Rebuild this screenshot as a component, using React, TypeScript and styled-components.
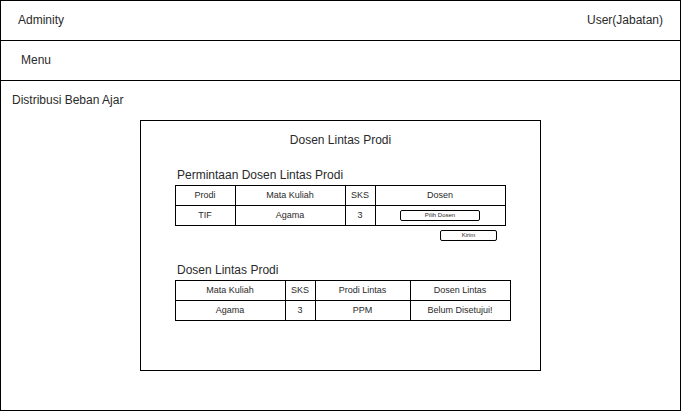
import React from "react";
import styled, { createGlobalStyle } from "styled-components";

const GlobalStyle = createGlobalStyle`
  *, *::before, *::after { box-sizing: border-box; }
  body {
    margin: 0;
    background: #fff;
    color: #2a2a2a;
    font-family: "Liberation Sans", Arial, Helvetica, sans-serif;
    font-size: 12px;
    line-height: 14px;
  }
`;

const Page = styled.div`
  display: flex;
  flex-direction: column;
  min-height: 100vh;
  border: 1px solid #000;
`;

const Bar = styled.div<{ $inset: number }>`
  display: flex;
  align-items: center;
  justify-content: space-between;
  min-height: 40px;
  padding: 0 17px 2px ${(p) => p.$inset}px;
  border-bottom: 1px solid #000;
`;

const Main = styled.main`
  display: flex;
  flex-direction: column;
  gap: 13px;
  padding: 12px 11px 39px;
`;

const PageTitle = styled.h1`
  margin: 0;
  font-size: 12px;
  font-weight: 400;
`;

const Card = styled.section`
  width: 100%;
  max-width: 401px;
  min-height: 251px;
  margin: 0 auto;
  padding: 12px 34px 49px;
  border: 1px solid #000;
`;

const CardTitle = styled.h2`
  margin: 0 0 21px;
  font-size: 12px;
  font-weight: 400;
  text-align: center;
`;

const Group = styled.section`
  & + & {
    margin-top: 22px;
  }
`;

const GroupTitle = styled.h3`
  margin: 0 0 3px;
  padding-left: 2px;
  font-size: 12px;
  font-weight: 400;
`;

const Table = styled.table<{ $width: number }>`
  width: ${(p) => p.$width}px;
  table-layout: fixed;
  border-collapse: separate;
  border-spacing: 0;
  border: solid #000;
  border-width: 1px 0 0 1px;
  font-size: 9px;
  line-height: 11px;
  text-align: center;

  th,
  td {
    height: 20px;
    padding: 0 1px 0 0;
    border: solid #000;
    border-width: 0 1px 1px 0;
    font-weight: 400;
    vertical-align: middle;
  }
`;

const Col = styled.col<{ $width: number }>`
  width: ${(p) => p.$width}px;
`;

const SmallButton = styled.button<{ $width: number }>`
  display: block;
  width: ${(p) => p.$width}px;
  height: 11px;
  margin: 0 auto;
  padding: 0;
  border: 1px solid #000;
  border-radius: 2px;
  background: #fff;
  color: inherit;
  font-family: inherit;
  font-size: 6px;
  line-height: 9px;
  text-align: center;
`;

const Actions = styled.div`
  display: flex;
  width: 322px;
  margin-top: 4px;

  ${SmallButton} {
    margin-right: 0;
  }
`;

interface DataTableProps {
  columns: { label: string; width: number }[];
  row: React.ReactNode[];
}

function DataTable({ columns, row }: DataTableProps) {
  const total = columns.reduce((sum, c) => sum + c.width, 1);
  return (
    <Table $width={total}>
      <colgroup>
        {columns.map((c) => (
          <Col key={c.label} $width={c.width} />
        ))}
      </colgroup>
      <thead>
        <tr>
          {columns.map((c) => (
            <th key={c.label} scope="col">{c.label}</th>
          ))}
        </tr>
      </thead>
      <tbody>
        <tr>
          {row.map((cell, i) => (
            <td key={columns[i].label}>{cell}</td>
          ))}
        </tr>
      </tbody>
    </Table>
  );
}

const requestColumns = [
  { label: "Prodi", width: 60 },
  { label: "Mata Kuliah", width: 110 },
  { label: "SKS", width: 30 },
  { label: "Dosen", width: 130 },
];

const resultColumns = [
  { label: "Mata Kuliah", width: 110 },
  { label: "SKS", width: 30 },
  { label: "Prodi Lintas", width: 95 },
  { label: "Dosen Lintas", width: 100 },
];

export default function App() {
  return (
    <>
      <GlobalStyle />
      <Page>
        <Bar as="header" $inset={17}>
          <span>Adminity</span>
          <span>User(Jabatan)</span>
        </Bar>
        <Bar as="nav" $inset={20}>
          <span>Menu</span>
        </Bar>
        <Main>
          <PageTitle>Distribusi Beban Ajar</PageTitle>
          <Card>
            <CardTitle>Dosen Lintas Prodi</CardTitle>
            <Group>
              <GroupTitle>Permintaan Dosen Lintas Prodi</GroupTitle>
              <DataTable
                columns={requestColumns}
                row={[
                  "TIF",
                  "Agama",
                  "3",
                  <SmallButton key="pick" type="button" $width={80}>Pilih Dosen</SmallButton>,
                ]}
              />
              <Actions>
                <SmallButton type="button" $width={57}>Kirim</SmallButton>
              </Actions>
            </Group>
            <Group>
              <GroupTitle>Dosen Lintas Prodi</GroupTitle>
              <DataTable
                columns={resultColumns}
                row={["Agama", "3", "PPM", "Belum Disetujui!"]}
              />
            </Group>
          </Card>
        </Main>
      </Page>
    </>
  );
}
